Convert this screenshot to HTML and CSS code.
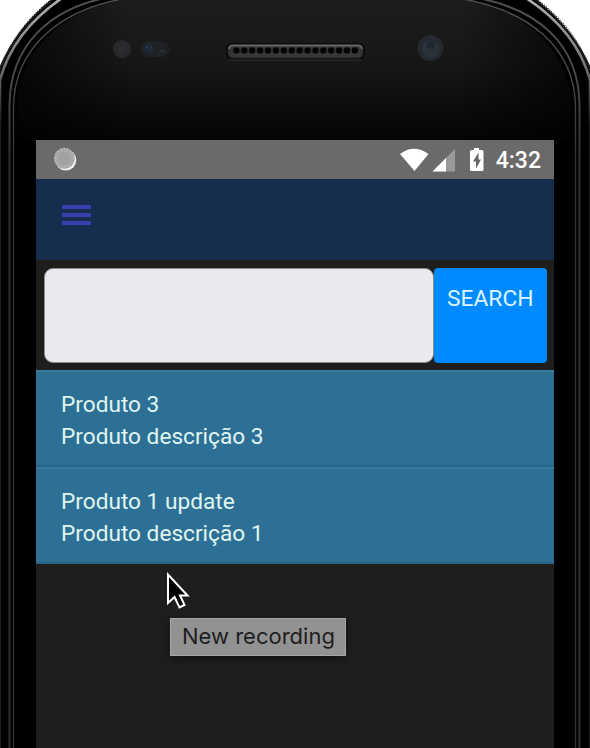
FILE: index.html
```html
<!DOCTYPE html>
<html lang="pt">
<head>
<meta charset="utf-8">
<title>Produtos</title>
<link rel="stylesheet" href="styles.css">
</head>
<body>
<div class="phone">
  <svg class="bezel" width="590" height="748" viewBox="0 0 590 748" aria-hidden="true">
    <defs>
      <linearGradient id="glass" x1="0" y1="0" x2="0" y2="140" gradientUnits="userSpaceOnUse">
        <stop offset="0" stop-color="#202020"/><stop offset=".45" stop-color="#191919"/><stop offset="1" stop-color="#040404"/>
      </linearGradient>
      <linearGradient id="side" x1="0" y1="0" x2="590" y2="0" gradientUnits="userSpaceOnUse">
        <stop offset=".03" stop-color="#000" stop-opacity=".7"/><stop offset=".22" stop-color="#000" stop-opacity="0.1"/><stop offset=".78" stop-color="#000" stop-opacity="0.1"/><stop offset=".97" stop-color="#000" stop-opacity=".7"/>
      </linearGradient>
      <linearGradient id="rim" x1="0" y1="0" x2="0" y2="130" gradientUnits="userSpaceOnUse">
        <stop offset="0" stop-color="#b0b0b0"/><stop offset=".5" stop-color="#777"/><stop offset="1" stop-color="#111"/>
      </linearGradient>
      <linearGradient id="ring" x1="0" y1="0" x2="0" y2="160" gradientUnits="userSpaceOnUse">
        <stop offset="0" stop-color="#505050"/><stop offset=".5" stop-color="#484848"/><stop offset="1" stop-color="#303030"/>
      </linearGradient>
      <pattern id="holes" x="232.5" y="46" width="7.9" height="9" patternUnits="userSpaceOnUse">
        <circle cx="3.9" cy="4.4" r="3.2" fill="#030303"/>
      </pattern>
    </defs>
    <path d="M-2 750V71C8 45 25 20 53-2H535C563 20 582 45 592 71V750Z"/>
    <path d="M-1 72C9 45 26 20 54-2M591 72C581 45 564 20 534-2" fill="none" stroke="#333" stroke-width="2.5" stroke-dasharray="1.2 1.2"/>
    <path d="M0 125V80C9 47 30 20 62-2M590 125V80C581 47 560 20 526-2" fill="none" stroke="url(#rim)" stroke-width="2.6"/>
    <path d="M17 750V108C18 55 60 3 145-3H440C530 3 570 55 571 108V750Z" fill="url(#glass)"/>
    <path d="M17 750V108C18 55 60 3 145-3H440C530 3 570 55 571 108V750Z" fill="url(#side)"/>
    <g fill="none" stroke="url(#ring)">
      <path d="M9.5 750V105C10 45 50 8 110-3M579.5 750V105C579 45 539 8 472-3" stroke-width="2"/>
      <path d="M13.500 750V107C14 50 57 8 134-3M575.500 750V107C575 50 532 8 450-3" stroke-width="1.4"/>
    </g>
    <path d="M.5 125V750M589.5 125V750" stroke="#1c1c1b"/>
    <circle cx="122" cy="49" r="9" fill="#29292b"/><circle cx="122" cy="49" r="4" fill="#2d2e33"/>
    <rect x="140.500" y="41" width="29" height="16" rx="8" fill="#202124"/>
    <circle cx="149" cy="48.500" r="5" fill="#1e2835"/><circle cx="147" cy="47" r="1" fill="#2b3f55"/><circle cx="151.500" cy="48" r="1" fill="#2b3f55"/><ellipse cx="162.500" cy="51" rx="3" ry="1.500" fill="#282d36"/>
    <rect x="226" y="43" width="139" height="17" rx="6" fill="#0b0b0b"/>
    <rect x="228" y="45" width="135" height="13" rx="5" fill="#363636" stroke="#222"/>
    <path d="M229 49Q229 45.500 233 45.500H358Q362 45.500 362 49" fill="none" stroke="#636363" stroke-width="2"/>
    <rect x="232.500" y="46" width="126.400" height="9" fill="url(#holes)"/>
    <path d="M229 60H362" stroke="#303030"/>
    <circle cx="430.500" cy="48" r="13" fill="#25292e"/><circle cx="430.500" cy="49" r="9" fill="#2a3139"/><circle cx="431" cy="45" r="4" fill="#1e252f"/>
  </svg>
  <main class="screen">
    <header class="status">
      <svg class="spinner" width="26" height="26" viewBox="0 0 26 26">
        <circle cx="12.800" cy="13" r="10.500" fill="#f2f2f2"/><circle cx="11.300" cy="11.300" r="10.500" fill="#a2a2a2"/>
        <circle cx="11.300" cy="11.300" r="8.500" fill="none" stroke="#b8b8b8" stroke-width="3.500" stroke-dasharray="1.300 1.700"/>
      </svg>
      <svg class="signals" width="90" height="26" viewBox="0 0 90 26">
        <path d="M0 6Q14-4.500 28.500 6L14.500 23Z" fill="#fff"/>
        <path d="M32.500 23.500L55 1V23.500Z" fill="#999"/><path d="M32.500 23.500L46 10V23.500Z" fill="#fff"/>
        <path d="M74 0H79V2H82Q83.500 2 83.500 3.500V21.500Q83.500 23 82 23H71.500Q70 23 70 21.500V3.500Q70 2 71.500 2H74Z" fill="#fff"/>
        <path d="M78.500 4.500L73 13.500H76V20.500L81 11.500H78.500Z" fill="#666"/>
      </svg>
      <span class="clock">4:32</span>
    </header>
    <nav class="toolbar"><span class="menu"><i></i><i></i><i></i></span></nav>
    <section class="search">
      <div class="field"></div>
      <div class="button">SEARCH</div>
    </section>
    <section class="list">
      <article class="item"><p>Produto 3</p><p>Produto descrição 3</p></article>
      <article class="item"><p>Produto 1 update</p><p>Produto descrição 1</p></article>
    </section>
  </main>
  <svg class="cursor" width="26" height="40" viewBox="0 0 26 40">
    <path d="M2 2.500V31L8.500 25L13.500 35.500L18.500 33L14 23.500H21.500Z" fill="#000" stroke="#fff" stroke-width="2"/>
  </svg>
  <div class="tooltip">New recording</div>
</div>
</body>
</html>
```

FILE: styles.css
```css
* { box-sizing: border-box; }
body { margin: 0; background: #fff; overflow: hidden; }
p { margin: 0; }
svg { display: block; }
.phone { position: relative; width: 590px; height: 748px; padding: 140px 36px 0; overflow: hidden; font-family: Roboto, sans-serif; }
.bezel { position: absolute; inset: 0; }
.screen { position: relative; height: 608px; background: #1f1e1c; box-shadow: 0 0 0 17px #000; clip-path: inset(0 -17px); }
.status { display: flex; height: 39px; padding: 0 13px 0 17px; background: #6a6a6a; color: #fff; }
.spinner { margin-top: 7px; }
.signals { margin: 8px 0 0 auto; }
.clock { margin: 7px 0 0 6px; font-size: 23px; line-height: 28px; font-weight: 500; }
.toolbar { height: 81px; padding: 26px; background: #162d4e; }
.menu { display: flex; flex-direction: column; gap: 4px; width: 29px; }
.menu i { height: 4px; background: #373eae; }
.search { display: flex; height: 110px; padding: 8px 7px 7px 8px; }
.field { width: 390px; border: 1px solid #8b8b8c; border-radius: 9px; background: #e9eaee; }
.button { flex: 1; padding: 17px 0 0 13px; border-radius: 4px; background: #008aff; color: #def5ff; font-size: 22.800px; line-height: 28px; }
.item { height: 97px; padding: 17px 25px 0; border-top: 2px solid #397c9f; border-bottom: 2px solid #286486; background: #2c7096; color: #e0f5ee; font-size: 22.650px; line-height: 31.500px; }
.cursor { position: absolute; left: 166px; top: 572px; }
.tooltip { position: absolute; left: 170px; top: 618px; width: 176px; height: 38px; padding-left: 11px; border: 1px solid #a6a6a6; background: #929292; box-shadow: 0 3px 9px #0006; color: #1e1e1e; font: 22px/35px Inter, sans-serif; white-space: nowrap; }
```
